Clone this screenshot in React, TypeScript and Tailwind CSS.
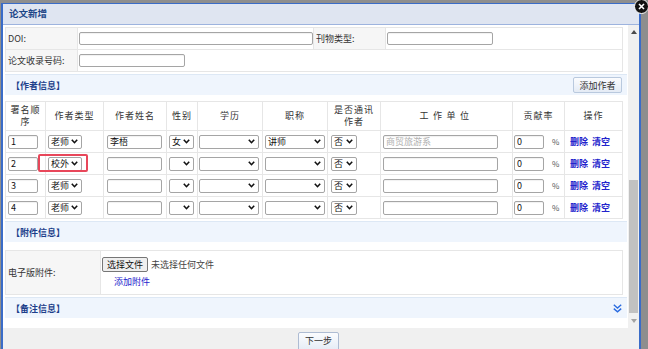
import React from "react";

const Chevron = () => (
  <svg width="7" height="5" viewBox="0 0 7 5" className="shrink-0">
    <path d="M0.8 0.8 L3.5 3.7 L6.2 0.8" fill="none" stroke="#111" strokeWidth="1.6" />
  </svg>
);

function Sel({ w, text }: { w: string; text?: string }) {
  return (
    <div
      className={`${w} h-[14px] border border-[#a5a5a5] rounded-[2px] bg-white flex items-center justify-between pl-[2px] pr-[3px] text-[9px] leading-none text-[#111]`}
    >
      <span>{text ?? ""}</span>
      <Chevron />
    </div>
  );
}

function Inp({ w, value, ph, h = "h-[14px]" }: { w: string; value?: string; ph?: string; h?: string }) {
  return (
    <input
      readOnly
      value={value ?? ""}
      placeholder={ph}
      className={`${w} ${h} border border-[#a5a5a5] rounded-[2px] bg-white px-[2px] py-0 text-[9px] leading-none text-[#111] outline-none placeholder:text-[#b0b0b0] shadow-[inset_0_1px_1px_rgba(0,0,0,0.06)]`}
    />
  );
}

function SectionHeader({ title, right }: { title: string; right?: React.ReactNode }) {
  return (
    <div className="w-[622px] h-[21px] bg-[#eff5fd] border-t border-[#dde8f5] flex items-center justify-between pl-[6px] pr-[5px]">
      <span className="text-[9px] font-bold text-[#1d3f8b] leading-none">{title}</span>
      {right}
    </div>
  );
}

const headCell =
  "flex items-center justify-center text-center border-r border-b border-[#e6e6e6] h-[29px] text-[9px] leading-[12px] tracking-[1px] text-[#333]";
const rowCell = "flex items-center border-r border-b border-[#e6e6e6] h-[22px]";

const rows = [
  { n: "1", type: "老师", name: "李梧", sex: "女", title: "讲师", ph: "商贸旅游系" },
  { n: "2", type: "校外", name: "", sex: "", title: "", ph: "", hl: true },
  { n: "3", type: "老师", name: "", sex: "", title: "", ph: "" },
  { n: "4", type: "老师", name: "", sex: "", title: "", ph: "" },
];

export default function App() {
  return (
    <div className="w-[648px] h-[349px] bg-[#8e8e8e] overflow-hidden flex flex-col font-['Noto_Sans_CJK_SC','Noto_Sans',sans-serif] text-[#333]">
      <div className="h-[3px] shrink-0" />
      <div className="flex flex-1">
        <div className="w-[1px] shrink-0" />
        <div className="relative w-[640px] shrink-0 flex flex-col border-t border-x-2 border-[#3a6cc8] bg-white">
          {/* title bar */}
          <div className="h-[21px] shrink-0 bg-[#dfe5f1] border-b border-[#9db3de] flex items-center pl-[6px]">
            <span className="text-[9.5px] font-bold text-[#1c4587] leading-none">论文新增</span>
          </div>
          {/* close button */}
          <div className="absolute left-[631px] top-[-5px] w-[15px] h-[15px] rounded-full bg-[#111] border border-white flex items-center justify-center">
            <svg width="7" height="7" viewBox="0 0 7 7">
              <path d="M1 1 L6 6 M6 1 L1 6" stroke="#fff" strokeWidth="1.6" />
            </svg>
          </div>
          {/* body */}
          <div className="h-[303px] shrink-0 flex">
            <div className="flex-1 flex flex-col pl-[2px] pt-[2px]">
              {/* form table */}
              <div className="w-[618px] border-l border-t border-[#e6e6e6] text-[9px]">
                <div className="flex h-[22px]">
                  <div className="w-[72px] shrink-0 bg-[#f6f6f6] border-r border-b border-[#e6e6e6] flex items-center pl-[2px]">DOI:</div>
                  <div className="w-[236px] shrink-0 border-r border-b border-[#e6e6e6] flex items-center pl-[1px]">
                    <Inp w="w-[234px]" h="h-[13px]" />
                  </div>
                  <div className="w-[72px] shrink-0 bg-[#f6f6f6] border-r border-b border-[#e6e6e6] flex items-center pl-[2px]">刊物类型:</div>
                  <div className="flex-1 border-r border-b border-[#e6e6e6] flex items-center pl-[1px]">
                    <Inp w="w-[106px]" h="h-[13px]" />
                  </div>
                </div>
                <div className="flex h-[22px]">
                  <div className="w-[72px] shrink-0 bg-[#f6f6f6] border-r border-b border-[#e6e6e6] flex items-center pl-[2px]">论文收录号码:</div>
                  <div className="flex-1 border-r border-b border-[#e6e6e6] flex items-center pl-[1px]">
                    <Inp w="w-[106px]" h="h-[13px]" />
                  </div>
                </div>
              </div>

              <div className="mt-[2px]">
                <SectionHeader
                  title="【作者信息】"
                  right={
                    <div className="w-[49px] h-[16px] rounded-[2px] border border-[#b9c9de] bg-gradient-to-b from-[#fbfcfe] to-[#e4ebf5] flex items-center justify-center text-[9px] text-[#333] leading-none">
                      添加作者
                    </div>
                  }
                />
              </div>

              {/* author table */}
              <div className="mt-[6px] w-[618px] border-l border-t border-[#e6e6e6] grid grid-cols-[40px_58px_63px_31px_65px_65px_53px_132px_52px_58px]">
                <div className={headCell}>署名顺<br />序</div>
                <div className={headCell}>作者类型</div>
                <div className={headCell}>作者姓名</div>
                <div className={headCell}>性别</div>
                <div className={headCell}>学历</div>
                <div className={headCell}>职称</div>
                <div className={headCell}>是否通讯<br />作者</div>
                <div className={`${headCell} tracking-[4.5px]`}>工作单位</div>
                <div className={headCell}>贡献率</div>
                <div className={headCell}>操作</div>
                {rows.map((r) => (
                  <React.Fragment key={r.n}>
                    <div className={`${rowCell} pl-[2px]`}>
                      <Inp w="w-[30px]" value={r.n} />
                    </div>
                    <div className={`${rowCell} pl-[2px] relative`}>
                      <Sel w="w-[34px]" text={r.type} />
                      {r.hl && (
                        <div className="absolute left-[-8px] top-[1px] w-[50px] h-[18px] border-2 border-[#e8475a] rounded-[2px]" />
                      )}
                    </div>
                    <div className={`${rowCell} pl-[3px]`}>
                      <Inp w="w-[55px]" value={r.name} />
                    </div>
                    <div className={`${rowCell} pl-[2px]`}>
                      <Sel w="w-[25px]" text={r.sex} />
                    </div>
                    <div className={`${rowCell} pl-[1px]`}>
                      <Sel w="w-[60px]" />
                    </div>
                    <div className={`${rowCell} pl-[2px]`}>
                      <Sel w="w-[60px]" text={r.title} />
                    </div>
                    <div className={`${rowCell} pl-[3px]`}>
                      <Sel w="w-[26px]" text="否" />
                    </div>
                    <div className={`${rowCell} pl-[2px]`}>
                      <Inp w="w-[115px]" ph={r.ph} />
                    </div>
                    <div className={`${rowCell} pl-[1px]`}>
                      <Inp w="w-[30px]" value="0" />
                      <span className="ml-[8px] text-[8px] text-[#555]">%</span>
                    </div>
                    <div className={`${rowCell} pl-[5px] gap-[4px] text-[9px] text-[#2222cc] font-bold`}>
                      <span>删除</span>
                      <span>清空</span>
                    </div>
                  </React.Fragment>
                ))}
              </div>

              <div className="mt-[2px]">
                <SectionHeader title="【附件信息】" />
              </div>

              {/* attachment table */}
              <div className="mt-[8px] w-[618px] border-l border-t border-[#e6e6e6] flex h-[45px] text-[9px]">
                <div className="w-[95px] shrink-0 bg-[#f6f6f6] border-r border-b border-[#e6e6e6] flex items-center pl-[2px]">电子版附件:</div>
                <div className="flex-1 border-r border-b border-[#e6e6e6] flex flex-col pl-[1px] pt-[6px]">
                  <div className="flex items-center">
                    <div className="w-[46px] h-[15px] rounded-[2px] border border-[#767676] bg-[#efefef] flex items-center justify-center text-[9px] text-[#111] leading-none">
                      选择文件
                    </div>
                    <span className="ml-[3px] text-[9px] text-[#444]">未选择任何文件</span>
                  </div>
                  <span className="mt-[4px] ml-[12px] leading-[12px] text-[9px] text-[#2222cc]">添加附件</span>
                </div>
              </div>

              <div className="mt-[2px]">
                <SectionHeader
                  title="【备注信息】"
                  right={
                    <svg width="9" height="9" viewBox="0 0 9 9" className="mt-[1px]">
                      <path d="M0.8 0.8 L4.5 4 L8.2 0.8 M0.8 4.6 L4.5 7.8 L8.2 4.6" fill="none" stroke="#2a6be0" strokeWidth="1.4" />
                    </svg>
                  }
                />
              </div>
            </div>
            {/* scrollbar */}
            <div className="w-[11px] shrink-0 bg-[#f0f0f0] flex flex-col">
              <div className="h-[14px] flex items-center justify-center">
                <svg width="6" height="4" viewBox="0 0 6 4"><path d="M0 4 L3 0 L6 4 Z" fill="#4a4a4a" /></svg>
              </div>
              <div className="h-[141px]" />
              <div className="h-[133px] mx-[1px] bg-[#c1c1c1]" />
              <div className="flex-1 flex items-center justify-center">
                <svg width="6" height="4" viewBox="0 0 6 4"><path d="M0 0 L3 4 L6 0 Z" fill="#a3a3a3" /></svg>
              </div>
            </div>
          </div>
          {/* footer */}
          <div className="flex-1 bg-[#f0f0f0] flex justify-center pt-[4px]">
            <div className="mr-[5px] w-[41px] h-[20px] rounded-[2px] border border-[#aebcd3] bg-gradient-to-b from-[#fbfcfe] to-[#e4ebf5] flex items-start justify-center pt-[3px] text-[9px] text-[#333] leading-none">
              下一步
            </div>
          </div>
        </div>
      </div>
    </div>
  );
}
